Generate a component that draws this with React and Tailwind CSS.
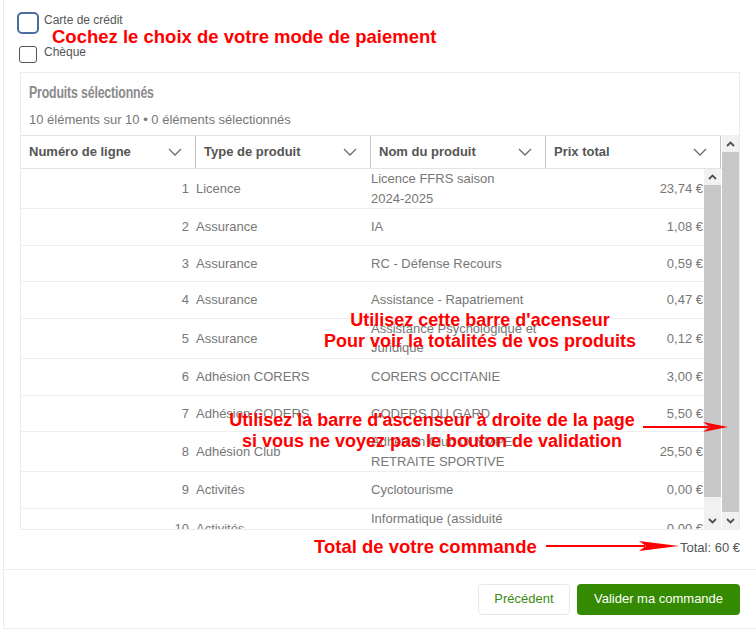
import React from "react";

const rows = [
  { n: 1, type: "Licence", name: <>Licence FFRS saison <span className="whitespace-nowrap">2024-2025</span></>, price: "23,74 €", tall: true },
  { n: 2, type: "Assurance", name: "IA", price: "1,08 €" },
  { n: 3, type: "Assurance", name: "RC - Défense Recours", price: "0,59 €" },
  { n: 4, type: "Assurance", name: "Assistance - Rapatriement", price: "0,47 €" },
  { n: 5, type: "Assurance", name: "Assistance Psychologique et Juridique", price: "0,12 €", tall: true },
  { n: 6, type: "Adhésion CORERS", name: "CORERS OCCITANIE", price: "3,00 €" },
  { n: 7, type: "Adhésion CODERS", name: "CODERS DU GARD", price: "5,50 €" },
  { n: 8, type: "Adhésion Club", name: "Adhésion Club OLYMPE RETRAITE SPORTIVE", price: "25,50 €", tall: true },
  { n: 9, type: "Activités", name: "Cyclotourisme", price: "0,00 €" },
  { n: 10, type: "Activités", name: "Informatique (assiduité régulière)", price: "0,00 €", tall: true },
];

const columns = ["Numéro de ligne", "Type de produit", "Nom du produit", "Prix total"];

function Chevron({ up = false }) {
  return (
    <svg width="9" height="6" viewBox="0 0 9 6">
      <polyline
        points={up ? "1,5 4.5,1.5 8,5" : "1,1 4.5,4.5 8,1"}
        fill="none"
        stroke="#505050"
        strokeWidth="1.8"
      />
    </svg>
  );
}

function HeaderChevron() {
  return (
    <svg width="14" height="8" viewBox="0 0 14 8">
      <polyline points="1,1 7,7 13,1" fill="none" stroke="#6b6b6b" strokeWidth="1.3" />
    </svg>
  );
}

function RedArrow({ width, head }) {
  return (
    <svg width={width} height="12" viewBox={`0 0 ${width} 12`}>
      <line x1="0" y1="6" x2={width - head + 6} y2="6" stroke="#ff0000" strokeWidth="2" />
      <polygon
        points={`${width},6 ${width - head},1 ${width - head + 7},6 ${width - head},11`}
        fill="#ff0000"
      />
    </svg>
  );
}

export default function App() {
  return (
    <div className="relative w-[756px] h-[629px] overflow-hidden bg-white font-['Liberation_Sans',Arial,sans-serif]">
      {/* Carte principale */}
      <div className="ml-[3px] h-[629px] border-l border-b border-[#ececec]">
        <div className="h-[569px] pt-[12px] pl-[16px] pr-[16px]">
          {/* Choix du paiement */}
          <div className="flex items-start -ml-[3px]">
            <div className="w-[22px] h-[22px] border-2 border-[#4b6ca3] rounded-[5px] bg-white" />
            <span className="ml-[5px] mt-[1px] text-[12px] leading-[14px] text-[#555]">Carte de crédit</span>
          </div>
          <div className="flex items-start -ml-[1px] mt-[12px]">
            <div className="w-[18px] h-[17px] border border-[#555] rounded-[3px] bg-white" />
            <span className="ml-[7px] -mt-[1px] text-[12px] leading-[14px] text-[#555]">Chèque</span>
          </div>

          {/* Produits */}
          <div className="mt-[9px] h-[458px] border border-[#ececec] flex flex-col">
            <div className="h-[62px] pl-[8px] pt-[11px]">
              <div className="w-fit origin-left scale-x-[0.77] font-bold text-[16px] leading-[18px] tracking-[-0.2px] text-[#8a8a8a] whitespace-nowrap">
                Produits sélectionnés
              </div>
              <div className="mt-[10px] text-[13px] leading-[16px] text-[#777]">
                10 éléments sur 10 • 0 éléments sélectionnés
              </div>
            </div>

            <div className="flex">
              <div className="w-[702px] flex flex-col">
                {/* En-tête */}
                <div className="h-[34px] border-t border-b border-[#e4e4e4] flex">
                  {columns.map((c) => (
                    <div
                      key={c}
                      className="w-[175px] border-r border-[#c4c4c4] flex items-center justify-between pl-[8px] pr-[13px] text-[13px] font-bold text-[#555]"
                    >
                      <span>{c}</span>
                      <HeaderChevron />
                    </div>
                  ))}
                </div>

                {/* Lignes */}
                <div className="h-[360px] flex">
                  <div className="w-[683px] overflow-hidden">
                    {rows.map((r) => (
                      <div
                        key={r.n}
                        className={`flex items-center border-b border-[#efefef] text-[13px] leading-[19.5px] text-[#777] ${
                          r.tall ? "min-h-[40px]" : "min-h-[36.67px]"
                        }`}
                      >
                        <div className="w-[175px] shrink-0 text-right pr-[7px]">{r.n}</div>
                        <div className="w-[175px] shrink-0">{r.type}</div>
                        <div className="w-[175px] shrink-0">{r.name}</div>
                        <div className="w-[158px] shrink-0 text-right pr-[1px]">{r.price}</div>
                      </div>
                    ))}
                  </div>
                  {/* barre interne */}
                  <div className="w-[17px] flex flex-col bg-[#f1f1f1]">
                    <div className="h-[16px] flex items-center justify-center">
                      <Chevron up />
                    </div>
                    <div className="h-[312px] bg-[#c8c8c8]" />
                    <div className="h-[15px]" />
                    <div className="h-[17px] flex items-center justify-center">
                      <Chevron />
                    </div>
                  </div>
                </div>
              </div>

              {/* barre externe */}
              <div className="w-[17px] h-[394px] flex flex-col bg-[#f1f1f1]">
                <div className="h-[17px] flex items-center justify-center">
                  <Chevron up />
                </div>
                <div className="h-[360px] bg-[#c8c8c8]" />
                <div className="h-[17px] flex items-center justify-center">
                  <Chevron />
                </div>
              </div>
            </div>
          </div>

          <div className="mt-[10px] text-right text-[13px] leading-[16px] text-[#555]">Total: 60 €</div>
        </div>

        {/* Boutons */}
        <div className="h-[59px] border-t border-[#ececec] flex items-center justify-end gap-[7px] pr-[16px]">
          <button className="h-[31px] w-[92px] border border-[#e8e8e8] rounded-[4px] bg-white text-[13px] text-[#3c8a13]">
            Précédent
          </button>
          <button className="h-[31px] w-[163px] rounded-[4px] bg-[#348a00] text-[13px] text-white">
            Valider ma commande
          </button>
        </div>
      </div>

      {/* Annotations */}
      <div className="absolute left-[52px] top-[26px] text-[18.5px] leading-[21px] font-bold text-[#ff0000] whitespace-nowrap">
        Cochez le choix de votre mode de paiement
      </div>
      <div className="absolute left-[280px] top-[310px] w-[400px] text-center text-[18px] leading-[21px] font-bold text-[#ff0000]">
        <div>Utilisez cette barre d'acenseur</div>
        <div>Pour voir la totalités de vos produits</div>
      </div>
      <div className="absolute left-[182px] top-[410px] w-[500px] text-center text-[18px] leading-[21px] font-bold text-[#ff0000]">
        <div>Utilisez la barre d'ascenseur à droite de la page</div>
        <div>si vous ne voyez pas le bouton de validation</div>
      </div>
      <div className="absolute left-[643px] top-[421px]">
        <RedArrow width={85} head={25} />
      </div>
      <div className="absolute left-[314px] top-[536px] text-[18.5px] leading-[21px] font-bold text-[#ff0000] whitespace-nowrap">
        Total de votre commande
      </div>
      <div className="absolute left-[546px] top-[540px]">
        <RedArrow width={133} head={40} />
      </div>
    </div>
  );
}
